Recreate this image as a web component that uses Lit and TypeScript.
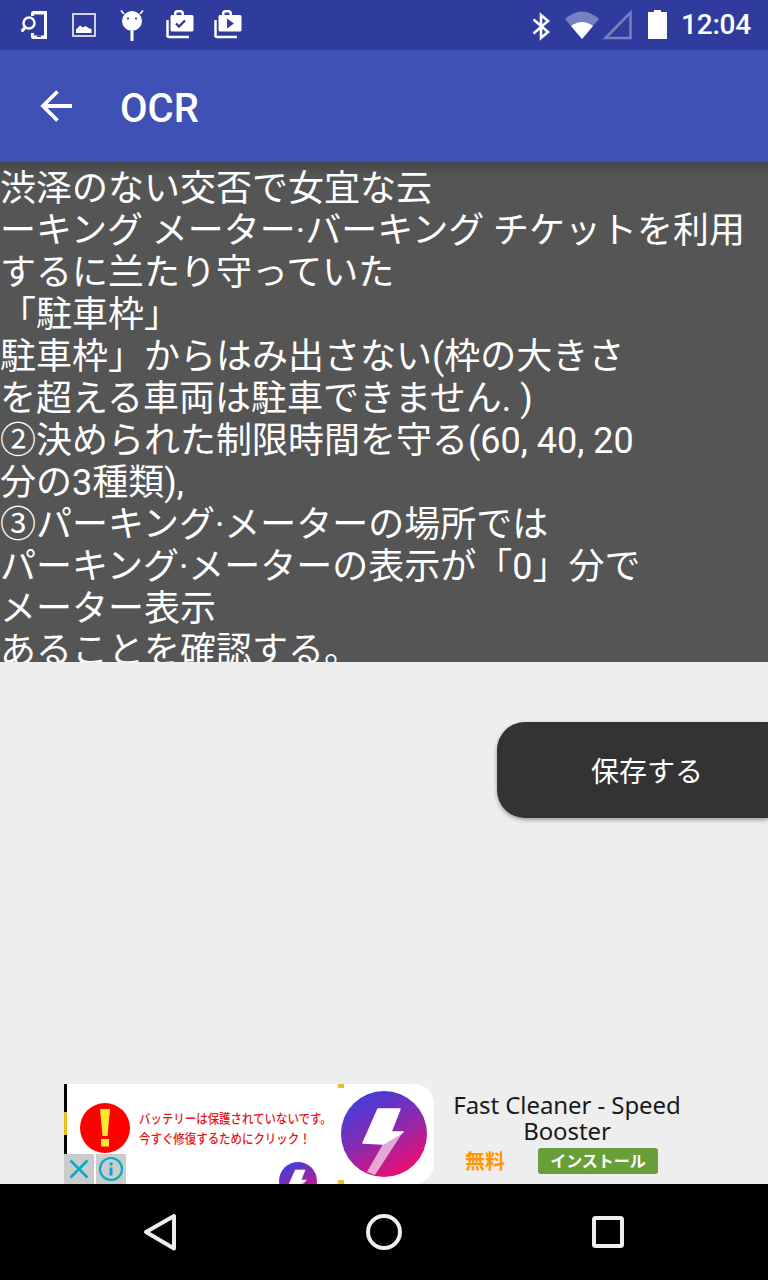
import { LitElement, html, css, svg } from "lit";
import { customElement } from "lit/decorators.js";

const LINES = [
  "渋泽のない交否で女宜な云",
  "ーキング メーター·バーキング チケットを利用",
  "するに兰たり守っていた",
  "「駐車枠」",
  "駐車枠」からはみ出さない(枠の大きさ",
  "を超える車両は駐車できません. )",
  "②決められた制限時間を守る(60, 40, 20",
  "分の3種類),",
  "③パーキング·メーターの場所では",
  "パーキング·メーターの表示が「0」分で",
  "メーター表示",
  "あることを確認する。",
];

const bolt = svg`<path d="M19 -2 L-1 10 L-17 38 L-9 41 Z" fill="#fff" fill-opacity=".62"/><path d="M-6 -25 L16 -25 L7 -2 L19 -2 L-1 10 L-21 9 Z" fill="#fff" stroke="#fff" stroke-width="1.500" stroke-linejoin="round"/>`;

@customElement("app-root")
export class AppRoot extends LitElement {
  static styles = css`
    :host { display: block; width: 768px; height: 1280px; overflow: hidden; background: #eeeeee; font-family: Roboto, "Noto Sans CJK JP", sans-serif; }
    .page { display: flex; flex-direction: column; height: 1280px; }
    .status { height: 50px; flex: none; background: #2f3c9e; display: flex; align-items: center; color: #fff; }
    .status svg { display: block; flex: none; }
    .clock { font: 500 28px/50px Roboto, sans-serif; letter-spacing: -.2px; margin-left: 14px; width: 70px; white-space: nowrap; }
    .spacer { flex: 1; }
    .appbar { height: 112px; flex: none; background: #3f51b5; display: flex; align-items: center; position: relative; z-index: 2; }
    .back { margin-left: 40px; flex: none; display: block; }
    .title { margin-left: 47px; margin-top: 5px; font: 500 40px/48px Roboto, sans-serif; color: #fff; }
    .ocr { height: 500px; flex: none; background: #555555; overflow: hidden; position: relative; color: #fff; font: 400 36px/42px Roboto, "Noto Sans CJK JP", sans-serif; padding-top: 6px; box-sizing: border-box; }
    .ocr::before { content: ""; position: absolute; left: 0; right: 0; top: 0; height: 14px; background: linear-gradient(rgba(0,0,0,.18), rgba(0,0,0,0)); }
    .ocr div { white-space: pre; position: relative; }
    .main { flex: 1; display: flex; flex-direction: column; min-height: 0; }
    .save-row { display: flex; justify-content: flex-end; margin-top: 60px; }
    .save { width: 271px; height: 96px; box-sizing: border-box; background: #333333; color: #fff; border-radius: 28px 0 0 28px; box-shadow: 0 2px 4px rgba(0,0,0,.35); display: flex; align-items: center; justify-content: center; font: 400 28px "Noto Sans CJK JP", sans-serif; padding-left: 29px; }
    .ad { margin-top: auto; height: 100px; display: flex; padding-left: 64px; overflow: hidden; flex: none; }
    .banner { width: 370px; height: 100px; flex: none; background: #fff; border-radius: 0 20px 20px 0; position: relative; overflow: hidden; box-sizing: border-box; display: flex; align-items: flex-start; }
    .strip { width: 3px; height: 100px; flex: none; background: linear-gradient(#000 0 28px, #e8c020 28px 51px, #000 51px); }
    .alert { margin: 19px 0 0 13px; flex: none; display: block; }
    .msg { margin: 24px 0 0 9px; color: #e8141c; font: 500 13px/20px "Noto Sans CJK JP", sans-serif; white-space: nowrap; transform: scaleX(.88); transform-origin: left top; width: 190px; }
    .brand { position: absolute; right: 7px; top: 7px; display: block; }
    .mini { position: absolute; left: 215px; top: 78px; display: block; }
    .tick { position: absolute; left: 274px; width: 6px; height: 4px; background: #e8c020; }
    .tick.a { top: 0; }
    .tick.b { bottom: 0; }
    .controls { position: absolute; left: 0; bottom: 0; display: flex; gap: 2px; }
    .ctl { width: 30px; height: 30px; background: #cccccc; display: block; }
    .info { width: 266px; flex: none; display: flex; flex-direction: column; align-items: center; padding-top: 8px; box-sizing: border-box; }
    .name { font: 400 24px/26px "Noto Sans", "Open Sans", sans-serif; letter-spacing: -.08px; color: #1a1a1a; text-align: center; width: 240px; }
    .cta { display: flex; align-items: center; margin-top: 4px; width: 204px; }
    .free { font: 700 20px/26px "Noto Sans CJK JP", sans-serif; color: #ff9800; width: 73px; flex: none; white-space: nowrap; }
    .install { width: 120px; height: 26px; flex: none; border-radius: 3px; background: #689f38; color: #fff; font: 700 16px/24px "Noto Sans CJK JP", sans-serif; text-align: center; white-space: nowrap; }
    .nav { height: 96px; flex: none; background: #000; display: flex; align-items: center; }
    .nav svg { display: block; }
  `;

  render() {
    return html`
      <div class="page">
        <div class="status">
          <svg width="532" height="50" viewBox="0 0 532 50" fill="#fff">
            <path d="M31 13.5a2.5 2.5 0 0 1 2.5-2.5H47v28H33.500a2.500 2.500 0 0 1-2.500-2.500V33h3v2.500h10V14.500H34V16h-3z" />
            <rect x="37" y="35.500" width="4" height="1.500" fill="#2f3c9e"/>
            <circle cx="29" cy="23" r="5.500" fill="none" stroke="#fff" stroke-width="2.500"/>
            <path d="M25 27.500L22.500 30.500" stroke="#fff" stroke-width="3" stroke-linecap="round"/>
            <rect x="73" y="14" width="22" height="22" fill="none" stroke="#fff" stroke-opacity=".85" stroke-width="1.800"/>
            <path d="M76 33v-3.500l4-4 3 2 2.500-1.500 3 2 3 1V33z" />
            <circle cx="132" cy="21" r="10"/>
            <path d="M124 14l-3-3.500M140 14l3-3.500" stroke="#fff" stroke-width="1.600"/>
            <rect x="130.500" y="31" width="3" height="10"/>
            <circle cx="128" cy="18.500" r="1.100" fill="#2f3c9e"/><circle cx="136" cy="18.500" r="1.100" fill="#2f3c9e"/>
            <path d="M174 15v-1.500a3.500 3.500 0 0 1 3.500-3.500h3a3.500 3.500 0 0 1 3.500 3.500V15h8a1.500 1.500 0 0 1 1.500 1.500V30a1.500 1.500 0 0 1-1.500 1.500H172a1.500 1.500 0 0 1-1.500-1.500V16.500A1.500 1.500 0 0 1 172 15zM176.500 15h5v-1.500a1 1 0 0 0-1-1h-3a1 1 0 0 0-1 1z"/>
            <path d="M167.500 20v15.500a1.500 1.500 0 0 0 1.500 1.500h20" fill="none" stroke="#fff" stroke-width="2.500"/>
            <path d="M176 23.500l3 3 6-6" fill="none" stroke="#2f3c9e" stroke-width="2.400"/>
            <path d="M222 15v-1.500a3.500 3.500 0 0 1 3.500-3.500h3a3.500 3.500 0 0 1 3.500 3.500V15h8a1.500 1.500 0 0 1 1.500 1.500V30a1.500 1.500 0 0 1-1.500 1.500H220a1.500 1.500 0 0 1-1.500-1.500V16.500A1.500 1.500 0 0 1 220 15zM224.500 15h5v-1.500a1 1 0 0 0-1-1h-3a1 1 0 0 0-1 1z"/>
            <path d="M215.500 20v15.500a1.500 1.500 0 0 0 1.500 1.500h20" fill="none" stroke="#fff" stroke-width="2.500"/>
            <path d="M227 18.500v10l7-5z" fill="#2f3c9e"/>
          </svg>
          <svg width="135" height="50" viewBox="532 0 135 50" fill="#fff">
            <path d="M533.500 19.500L548 32l-7 6V15l7 6-14.500 12.500" fill="none" stroke="#fff" stroke-width="2.600"/>
            <path d="M582 39L565 19Q582 4 599 19z" fill-opacity=".35"/>
            <path d="M582 39L571 26Q582 18 593 26z"/>
            <path d="M605.500 38L630.500 12.500V38z" fill="none" stroke="#fff" stroke-opacity=".35" stroke-width="2.500"/>
            <path d="M654 12v-2h7v2h6v27h-19V12z"/>
          </svg>
          <span class="clock">12:04</span>
          <span class="spacer"></span>
        </div>
        <div class="appbar">
          <svg class="back" width="33" height="34" viewBox="0 0 33 34" fill="none" stroke="#fff" stroke-width="3.800">
            <path d="M32 17H4M17.500 2.500L3 17l14.500 14.500"/>
          </svg>
          <span class="title">OCR</span>
        </div>
        <div class="ocr">${LINES.map((l) => html`<div>${l}</div>`)}</div>
        <div class="main">
          <div class="save-row"><div class="save">保存する</div></div>
          <div class="ad">
            <div class="banner">
              <div class="strip"></div>
              <svg class="alert" width="50" height="50" viewBox="0 0 50 50">
                <circle cx="25" cy="25" r="25" fill="#ff0000"/>
                <path d="M20 6h10l-2.500 27h-5z" fill="#ffe92e"/>
                <rect x="21" y="36" width="8" height="7.500" fill="#ffe92e"/>
              </svg>
              <div class="msg">バッテリーは保護されていないです。<br />今すぐ修復するためにクリック！</div>
              <span class="tick a"></span><span class="tick b"></span>
              <svg class="brand" width="86" height="86" viewBox="-43 -43 86 86">
                <defs><linearGradient id="g" x1=".2" y1="0" x2=".75" y2="1"><stop offset="0" stop-color="#3a40e0"/><stop offset=".5" stop-color="#8a2ab0"/><stop offset="1" stop-color="#f80a68"/></linearGradient></defs>
                <circle r="43" fill="url(#g)"/>${bolt}
              </svg>
              <svg class="mini" width="38" height="38" viewBox="-43 -43 86 86">
                <defs><linearGradient id="g2" x1=".2" y1="0" x2=".75" y2="1"><stop offset="0" stop-color="#3a40e0"/><stop offset=".5" stop-color="#8a2ab0"/><stop offset="1" stop-color="#f80a68"/></linearGradient></defs>
                <circle r="43" fill="url(#g2)"/>${bolt}
              </svg>
              <div class="controls">
                <svg class="ctl" viewBox="0 0 30 30" fill="none" stroke="#00aec7" stroke-width="2.600"><path d="M6.500 6.500l17 17M23.500 6.500l-17 17"/></svg>
                <svg class="ctl" viewBox="0 0 30 30" fill="none" stroke="#00aec7" stroke-width="2.200"><circle cx="15" cy="15" r="11"/><path d="M15 13.500v8" stroke-width="3"/><path d="M15 8.500v3" stroke-width="3"/></svg>
              </div>
            </div>
            <div class="info">
              <div class="name">Fast Cleaner - Speed Booster</div>
              <div class="cta"><span class="free">無料</span><span class="install">インストール</span></div>
            </div>
          </div>
        </div>
        <div class="nav">
          <svg width="768" height="96" viewBox="0 1184 768 96" fill="none" stroke="#eeeeee" stroke-width="4" stroke-linejoin="round">
            <path d="M146 1232L174 1216V1248.500z"/>
            <circle cx="384" cy="1232" r="16"/>
            <rect x="594" y="1218" width="28" height="28" rx="1.500"/>
          </svg>
        </div>
      </div>
    `;
  }
}
